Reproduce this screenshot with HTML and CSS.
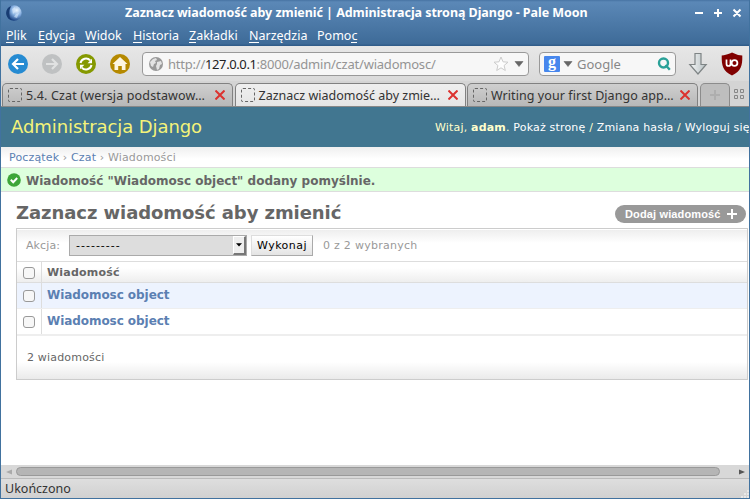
FILE: index.html
```html
<!DOCTYPE html>
<html lang="pl">
<head>
<meta charset="utf-8">
<title>Zaznacz wiadomość aby zmienić | Administracja stroną Django</title>
<link rel="stylesheet" href="styles.css">
</head>
<body>
<div class="window">
  <header class="chrome">
    <div class="titlebar">
      <svg class="moon" width="16" height="16" viewBox="0 0 16 16"><defs><radialGradient id="mg" cx=".68" cy=".32" r=".7"><stop offset="0" stop-color="#edf6ff"/><stop offset=".5" stop-color="#86afe0"/><stop offset="1" stop-color="#173f80"/></radialGradient></defs><circle cx="8" cy="8" r="7.7" fill="url(#mg)"/><path d="M5 .9A7.7 7.7 0 0 0 5 15.100Q1.500 8 5 .9z" fill="#183c72"/><path d="M6 4l3-2 1 4-3 3zM10 9l3-1-2 5-3-1z" fill="#dcecff" opacity=".55"/></svg>
      <h1 class="title">Zaznacz wiadomość aby zmienić | Administracja stroną Django - Pale Moon</h1>
      <svg class="wincontrols" width="50" height="12" viewBox="0 0 50 12" stroke="#fff" stroke-width="2" fill="none"><path d="M0 6h8M19 6h8M23 2v8M38.500 2.500l7 7M45.500 2.500l-7 7"/></svg>
    </div>
    <nav class="menu">
      <span class="m1"><u>P</u>lik</span><span class="m2"><u>E</u>dycja</span><span class="m3"><u>W</u>idok</span><span class="m4"><u>H</u>istoria</span><span class="m5"><u>Z</u>akładki</span><span class="m6"><u>N</u>arzędzia</span><span class="m7">Pomo<u>c</u></span>
    </nav>
  </header>
  <div class="toolbar">
    <svg class="nav" width="124" height="22" viewBox="0 0 124 22" fill="none" stroke="#fff" stroke-width="2">
      <circle cx="11" cy="11" r="10" fill="#268bd2" stroke="none"/><path d="M17 11H6M11 6l-5 5 5 5" stroke-width="2.200"/>
      <circle cx="45" cy="11" r="10" fill="#bfc1c2" stroke="none"/><path d="M39 11h11M45 6l5 5-5 5" stroke="#e1e2e2" stroke-width="2.200"/>
      <circle cx="79" cy="11" r="10" fill="#859900" stroke="none"/><path d="M73.500 10a5.600 5.600 0 0 1 9.700-2.600M84.500 12a5.600 5.600 0 0 1-9.700 2.600"/><path d="M85 5.800v4.400h-4.400zM73 16.200v-4.400h4.400z" fill="#fff" stroke="none"/>
      <circle cx="113" cy="11" r="10" fill="#b58900" stroke="none"/><path d="M113 4l7.500 7h-2v6h-3.700v-4h-3.600v4h-3.700v-6h-2z" fill="#fdf6e3" stroke="none"/>
    </svg>
    <div class="urlbar">
      <svg width="14" height="14" viewBox="0 0 14 14"><circle cx="7" cy="7" r="7" fill="#999"/><path d="M1 5l3-3 3-1 1 2-2 1 1 2-2 1-1 3-2-1zM8 5l4-1 1 3-2 1-1 4-2 1-1-4 1-2z" fill="#e3e3e3"/></svg>
      <span class="url">http://<b>127.0.0.1</b>:8000/admin/czat/wiadomosc/</span>
      <svg class="star" width="16" height="16" viewBox="0 0 16 16"><path d="M8 1l2 4.800 5 .4-3.900 3.300 1.200 5L8 11.800l-4.300 2.700 1.200-5L1 6.200l5-.4z" fill="#fdfdfd" stroke="#ccc"/></svg>
      <svg width="10" height="6" viewBox="0 0 10 6"><path d="M1 .5h8L5 5.500z" fill="#666" stroke="#666" stroke-width=".6"/></svg>
    </div>
    <div class="search">
      <span class="g">g</span>
      <svg width="10" height="6" viewBox="0 0 10 6"><path d="M1 .5h8L5 5.500z" fill="#666" stroke="#666" stroke-width=".6"/></svg>
      <span class="ph">Google</span>
      <svg width="14" height="14" viewBox="0 0 14 14" fill="none" stroke="#2aa198" stroke-width="2.400"><circle cx="6.500" cy="6" r="4.500"/><path d="M8.500 8l4.300 4.800"/></svg>
    </div>
    <svg class="down" width="20" height="24" viewBox="0 0 20 24"><defs><linearGradient id="dg"><stop offset="0" stop-color="#f7f9f9"/><stop offset="1" stop-color="#b6bfc2"/></linearGradient></defs><path d="M7 1.500h6v11h5.200L10 22 1.800 12.500H7z" fill="url(#dg)" stroke="#7e8485" stroke-width="1.200"/></svg>
    <svg class="shield" width="22" height="24" viewBox="0 0 22 24"><path d="M11 .5Q15.500 3 21.300 3.500C21.500 14 20 19 11 23.500 2 19 .5 14 .7 3.500 6.500 3 11 .5 11 .5z" fill="#800000"/><path d="M5.500 7.500V12q0 2 2 2t2-2V7.500M9.500 14V7.500" fill="none" stroke="#fff" stroke-width="1.700"/><circle cx="13.500" cy="11" r="2.900" fill="none" stroke="#fff" stroke-width="1.800"/></svg>
  </div>
  <div class="tabs">
    <div class="tab"><i></i><span class="t1">5.4. Czat (wersja podstawow…</span><svg width="10" height="10" viewBox="0 0 10 10"><path d="M.5 .5l9 9M9.500 .5l-9 9" stroke="#dc322f" stroke-width="2"/></svg></div>
    <div class="tab active"><i></i><span class="t2">Zaznacz wiadomość aby zmie…</span><svg width="10" height="10" viewBox="0 0 10 10"><path d="M.5 .5l9 9M9.500 .5l-9 9" stroke="#dc322f" stroke-width="2"/></svg></div>
    <div class="tab"><i></i><span class="t3">Writing your first Django app…</span><svg width="10" height="10" viewBox="0 0 10 10"><path d="M.5 .5l9 9M9.500 .5l-9 9" stroke="#dc322f" stroke-width="2"/></svg></div>
    <div class="newtab"><svg width="10" height="10" viewBox="0 0 10 10"><path d="M0 5h10M5 0v10" stroke="#aeaeae" stroke-width="2"/></svg></div>
    <svg class="grid" width="10" height="10" viewBox="0 0 10 10" fill="none" stroke="#888"><path d="M.5 .5h3v3h-3zM6.500 .5h3v3h-3zM.5 6.500h3v3h-3zM6.500 6.500h3v3h-3z"/></svg>
  </div>
  <main class="page">
    <div class="header">
      <div class="brand">Administracja Django</div>
      <div class="user">Witaj, <strong>adam</strong>. <a>Pokaż stronę</a> / <a>Zmiana hasła</a> / <a>Wyloguj się</a></div>
    </div>
    <div class="crumbs"><a>Początek</a> › <a>Czat</a> › Wiadomości</div>
    <div class="message"><svg width="14" height="14" viewBox="0 0 14 14"><circle cx="7" cy="7" r="6.800" fill="#3da639"/><path d="M3.800 6.800l2.400 2.400 4-4.200" fill="none" stroke="#fff" stroke-width="2"/></svg><span>Wiadomość "Wiadomosc object" dodany pomyślnie.</span></div>
    <div class="heading">
      <h2>Zaznacz wiadomość aby zmienić</h2>
      <a class="add"><span>Dodaj wiadomość</span><svg width="10" height="10" viewBox="0 0 10 10"><path d="M0 5h10M5 0v10" stroke="#fff" stroke-width="2"/></svg></a>
    </div>
    <div class="list">
      <div class="actions"><label>Akcja:</label><div class="select"><span>---------</span><div class="arrow"><svg width="6" height="4" viewBox="0 0 6 4"><path d="M0 .3h6L3 3.500z"/></svg></div></div><button>Wykonaj</button><span class="count">0 z 2 wybranych</span></div>
      <div class="row head"><div class="cell"><i class="check"></i></div><b>Wiadomość</b></div>
      <div class="row odd"><div class="cell"><i class="check"></i></div><b>Wiadomosc object</b></div>
      <div class="row even"><div class="cell"><i class="check"></i></div><b>Wiadomosc object</b></div>
      <div class="total">2 wiadomości</div>
    </div>
  </main>
  <div class="scroll"><svg width="6" height="6" viewBox="0 0 6 6"><path d="M6 .5v5L0 3z" fill="#aaa"/></svg><div class="thumb"></div><svg width="6" height="6" viewBox="0 0 6 6"><path d="M0 .5v5L6 3z" fill="#555"/></svg></div>
  <footer class="status"><span>Ukończono</span><svg width="10" height="10" viewBox="0 0 10 10"><path d="M9 1v9M6 4v6M3 7v3" stroke="#e8e8e8" stroke-width="2" stroke-dasharray="2 1"/></svg></footer>
</div>
</body>
</html>
```
FILE: styles.css
```css
* { box-sizing: border-box; }
body { margin: 0; width: 750px; height: 499px; overflow: hidden; font-family: "DejaVu Sans", sans-serif; }
svg { display: block; flex: none; }
.window { width: 750px; height: 499px; display: flex; flex-direction: column; border: 1px solid #41729f; border-top: 0; overflow: hidden; background: #fff; }
.window > * { flex: none; }
.chrome { height: 46px; background: linear-gradient(#4773a3 0, #5b88b7 2px, #3e6b98 44px, #315d8a 45px); border-bottom: 1px solid #315d8a; color: #fff; font-family: "Noto Sans", sans-serif; }
.titlebar { height: 25px; display: flex; align-items: center; padding-left: 5px; }
.title { flex: 1; margin: 0 0 0 103px; font-size: 12.500px; line-height: 25px; font-weight: 700; white-space: nowrap; letter-spacing: -.05px; }
.wincontrols { margin-right: 4px; }
.menu { height: 20px; display: flex; padding-left: 5px; font-size: 12.500px; line-height: 22px; white-space: nowrap; }
.menu u { text-decoration: none; background: linear-gradient(#fff, #fff) 0 15px / 100% 1px no-repeat; }
.m1 { width: 32px; } .m2 { width: 47px; } .m3 { width: 48px; } .m4 { width: 56px; } .m5 { width: 60px; } .m6 { width: 68px; }
.toolbar { height: 35px; display: flex; align-items: center; padding: 1px 0 0 6px; background: linear-gradient(#e7e7e7, #dadada); }
.urlbar, .search { height: 24px; display: flex; align-items: center; border: 1px solid #999; border-radius: 4px; background: #f7f7f7; font: 13px/22px "Noto Sans", sans-serif; }
.urlbar { width: 387px; margin-left: 11px; padding: 0 4px 0 6px; }
.url { margin-left: 5px; flex: 1; color: #949494; white-space: nowrap; letter-spacing: -.22px; }
.url b { font-weight: 400; color: #222; letter-spacing: -.4px; }
.star { margin-right: 5px; }
.search { width: 137px; margin-left: 10px; padding: 0 4px 0 4px; }
.g { width: 16px; height: 16px; border-radius: 1px; background: #4787ed; color: #fff; font: 700 16px/12px "Liberation Serif", serif; text-align: center; margin-right: 3px; }
.ph { flex: 1; margin-left: 4px; color: #888; }
.down { margin-left: 12px; }
.shield { margin-left: 13px; }
.tabs { height: 26px; padding: 2px 0 0 1px; display: flex; background: #d4d4d4; border-bottom: 1px solid #888; font: 12.500px/22px "Noto Sans", sans-serif; color: #333; }
.tab { width: 231px; height: 23px; display: flex; align-items: center; padding: 0 7px 0 5px; margin-right: 1.500px; border: 1px solid #818181; border-bottom: 0; border-radius: 5px 5px 0 0; background: linear-gradient(#cfcfcf, #b8b8b8); white-space: nowrap; }
.tab.active { background: linear-gradient(#efefef, #e5e5e5); }
.tab i { width: 14px; height: 14px; flex: none; border: 1px dashed #666; border-radius: 2px; margin-right: 4px; }
.tab span { flex: 1; padding-top: 2px; }
.t1 { letter-spacing: .15px; }
.t3 { letter-spacing: .07px; }
.newtab { width: 30px; height: 23px; border: 1px solid #8c8c8c; border-bottom: 0; border-radius: 5px 5px 0 0; background: #bebebe; display: grid; place-items: center; }
.grid { margin: 6px 0 0 4px; }
.page { height: 358px; background: #fff; color: #666; font-size: 11px; }
.header { height: 40px; display: flex; justify-content: space-between; align-items: center; background: #417690; color: #ffc; white-space: nowrap; }
.brand { padding-left: 10px; font-size: 18px; line-height: 38px; color: #f4f379; letter-spacing: -.08px; }
.user { width: 314px; font-size: 11px; line-height: 40px; letter-spacing: .18px; padding-top: 1px; }
.user a { color: #fff; }
.crumbs { height: 21px; padding-left: 8px; line-height: 21px; color: #999; background: linear-gradient(#efefef, #fff 12px); border-bottom: 1px solid #ddd; letter-spacing: .15px; }
.crumbs a { color: #5b80b2; }
.message { height: 24px; display: flex; align-items: center; padding-left: 6px; background: #dfd; border-bottom: 1px solid #ddd; font-size: 12px; font-weight: 700; }
.message span { margin-left: 5px; line-height: 24px; padding-top: 2px; }
.heading { height: 36px; padding: 8px 3px 0 15px; display: flex; justify-content: space-between; }
h2 { margin: 0; font-size: 18px; line-height: 26px; letter-spacing: -.07px; }
.add { width: 131px; height: 18px; margin-top: 5px; border-radius: 9px; display: flex; align-items: center; justify-content: space-between; padding: 0 9px 0 10px; background: #999; color: #fff; font: 700 11px/18px "Liberation Sans", sans-serif; letter-spacing: .14px; }
.list { width: 732px; height: 152px; margin-left: 15px; border: 1px solid #ccc; }
.actions { height: 33px; display: flex; align-items: center; padding-left: 9px; border-bottom: 1px solid #ddd; color: #999; background: linear-gradient(#fff 0 1px, #eee 1px, #fff 14px); }
.actions label { width: 43px; letter-spacing: .1px; }
.select { width: 178px; height: 21px; border: 1px solid #aaa; background: #ddd; color: #000; display: flex; justify-content: space-between; line-height: 20px; padding-left: 6px; letter-spacing: 1px; }
.arrow { width: 13px; background: #eee; border: 1px solid #fff; border-right: 2px solid #777; border-bottom: 2px solid #777; display: grid; place-items: center; }
.actions button { width: 62px; height: 21px; margin-left: 4px; padding: 0; border: 1px solid #ddd; border-right-color: #aaa; border-bottom-color: #aaa; background: linear-gradient(#fff, #e4e4e4); font: 11px "DejaVu Sans", sans-serif; color: #000; letter-spacing: .45px; }
.count { margin-left: 10px; letter-spacing: .27px; }
.row { display: flex; }
.row b { padding-left: 5px; }
.cell { width: 25px; border-right: 1px solid #ddd; padding: 6px 0 0 6px; }
.check { display: block; width: 12px; height: 12px; border: 1px solid #999; border-radius: 3px; background: #f7f7f7; }
.head { height: 21px; background: linear-gradient(#fff 6px, #eee); border-bottom: 1px solid #ddd; line-height: 21px; letter-spacing: .22px; }
.head .cell { padding-top: 5px; }
.odd, .even { color: #5b80b2; font-size: 12px; line-height: 24px; letter-spacing: -.06px; }
.odd .cell, .even .cell { padding-top: 7px; }
.odd { height: 26px; background: #edf3fe; border-bottom: 1px solid #eee; }
.even { height: 27px; border-bottom: 2px solid #eee; }
.total { height: 43px; padding-left: 10px; line-height: 43px; background: linear-gradient(#fff 26px, #eaeaea); letter-spacing: .18px; }
.scroll { height: 13px; display: flex; align-items: center; justify-content: space-between; padding: 0 4px 0 5px; background: #d8d8d8; }
.thumb { width: 704px; height: 9px; border: 1px solid #999; border-radius: 5px; background: #b5b5b5; margin-right: auto; margin-left: 4px; }
.status { height: 21px; display: flex; justify-content: space-between; align-items: flex-end; border-top: 1px solid #bbb; background: linear-gradient(#dedede, #d0d0d0); font: 12.500px/20px "Noto Sans", sans-serif; color: #333; padding-left: 4px; }
```
